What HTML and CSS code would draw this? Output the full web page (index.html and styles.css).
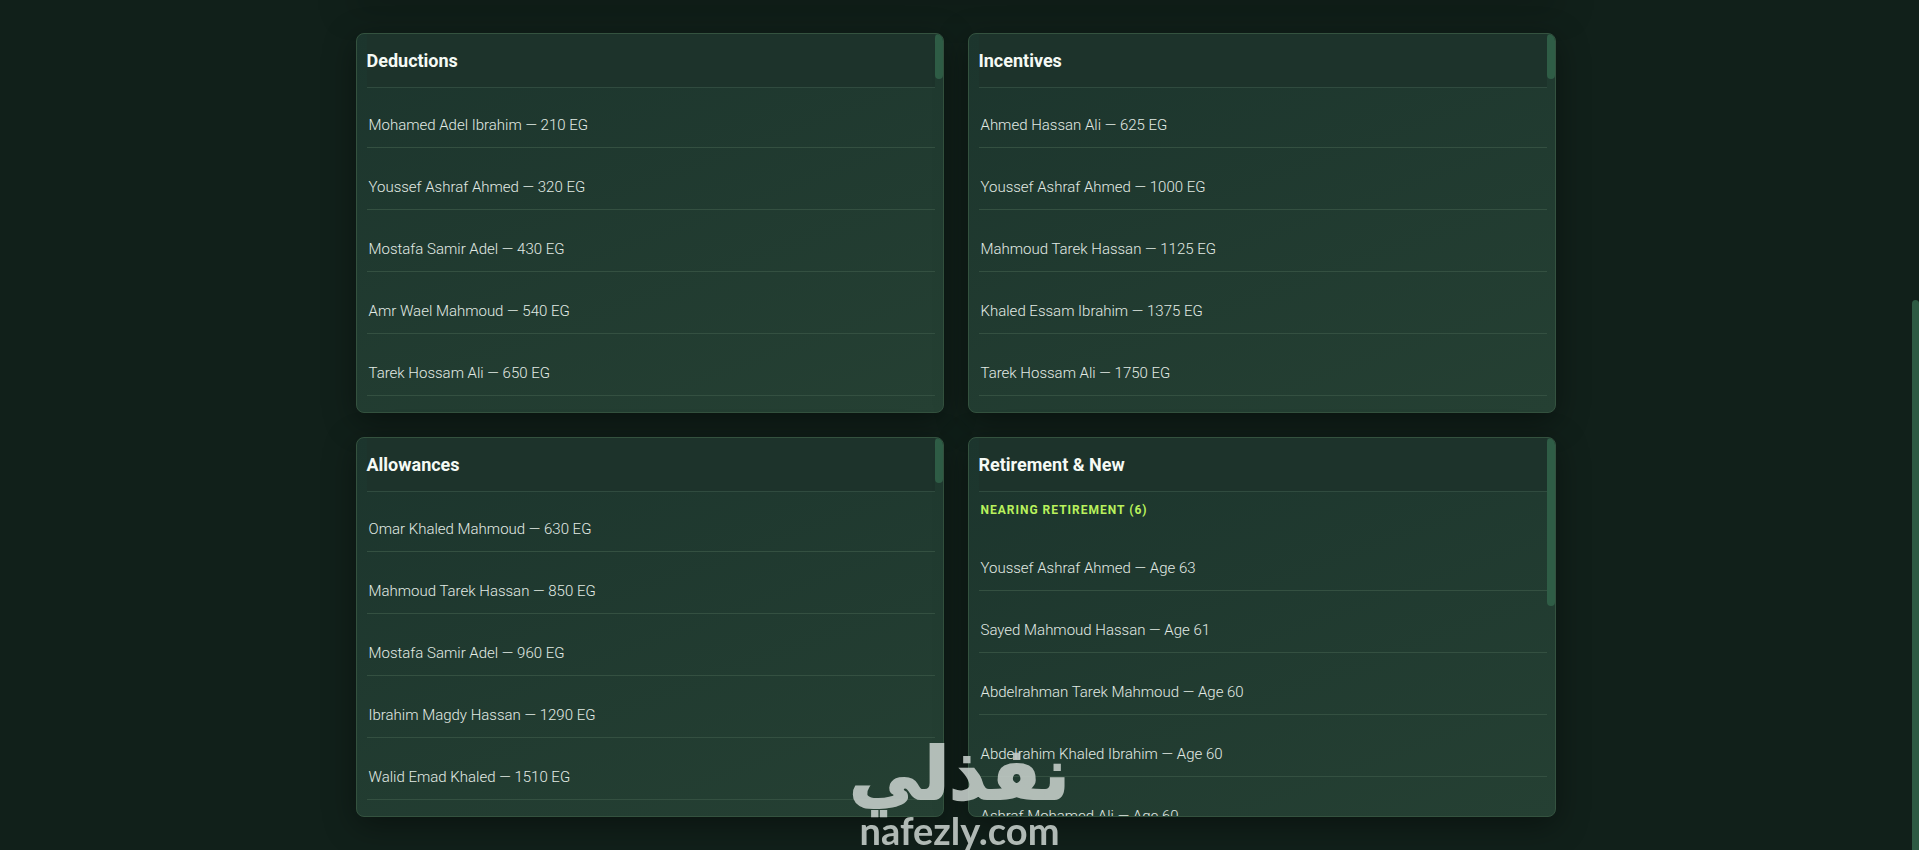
FILE: index.html
```html
<!DOCTYPE html>
<html lang="en">

<head>
    <meta charset="UTF-8">
    <meta name="viewport" content="width=device-width, initial-scale=1.0">
    <title>Payroll Dashboard</title>
    <link rel="stylesheet" href="styles.css">
</head>

<body>

    <div class="section-shadow"></div>

    <main class="cards">

        <!-- Deductions -->
        <section class="card">
            <h2>Deductions</h2>
            <ul class="list">
                <li>Mohamed Adel Ibrahim — 210 EG</li>
                <li>Youssef Ashraf Ahmed — 320 EG</li>
                <li>Mostafa Samir Adel — 430 EG</li>
                <li>Amr Wael Mahmoud — 540 EG</li>
                <li>Tarek Hossam Ali — 650 EG</li>
            </ul>
            <span class="thumb"></span>
        </section>

        <!-- Incentives -->
        <section class="card">
            <h2>Incentives</h2>
            <ul class="list">
                <li>Ahmed Hassan Ali — 625 EG</li>
                <li>Youssef Ashraf Ahmed — 1000 EG</li>
                <li>Mahmoud Tarek Hassan — 1125 EG</li>
                <li>Khaled Essam Ibrahim — 1375 EG</li>
                <li>Tarek Hossam Ali — 1750 EG</li>
            </ul>
            <span class="thumb"></span>
        </section>

        <!-- Allowances -->
        <section class="card">
            <h2>Allowances</h2>
            <ul class="list">
                <li>Omar Khaled Mahmoud — 630 EG</li>
                <li>Mahmoud Tarek Hassan — 850 EG</li>
                <li>Mostafa Samir Adel — 960 EG</li>
                <li>Ibrahim Magdy Hassan — 1290 EG</li>
                <li>Walid Emad Khaled — 1510 EG</li>
            </ul>
            <span class="thumb"></span>
        </section>

        <!-- Retirement -->
        <section class="card">
            <h2>Retirement &amp; New</h2>
            <h3>Nearing Retirement (6)</h3>
            <ul class="list">
                <li>Youssef Ashraf Ahmed — Age 63</li>
                <li>Sayed Mahmoud Hassan — Age 61</li>
                <li>Abdelrahman Tarek Mahmoud — Age 60</li>
                <li>Abdelrahim Khaled Ibrahim — Age 60</li>
                <li>Ashraf Mohamed Ali — Age 60</li>
            </ul>
            <span class="thumb thumb-long"></span>
        </section>

    </main>

    <div class="watermark">
        <span class="watermark-ar" lang="ar" dir="rtl">نفذلي</span>
        <span class="watermark-url">nafezly.com</span>
    </div>

    <div class="page-thumb"></div>

</body>

</html>
```

FILE: styles.css
```css
* {
    box-sizing: border-box;
}

body {
    margin: 0;
    padding: 0 8px 0 0;
    min-height: 100vh;
    background-color: #11201a;
    color: #e2ebe5;
    font-family: Roboto, "Liberation Sans", sans-serif;
    font-size: 15px;
    line-height: 24px;
    overflow: hidden;
}

.section-shadow {
    max-width: 1200px;
    height: 0;
    margin: 0 auto;
    box-shadow: 0 0 32px 4px rgba(0, 0, 0, 0.5);
}

.cards {
    display: grid;
    grid-template-columns: 1fr 1fr;
    gap: 24px;
    max-width: 1200px;
    margin: 0 auto;
    padding: 33px 0;
}

.card {
    position: relative;
    height: 380px;
    padding: 0 8px 0 10px;
    overflow: hidden;
    border: 1px solid #34523f;
    border-radius: 8px;
    background: linear-gradient(160deg, #1c352d, #254033);
    box-shadow: 0 8px 32px rgba(0, 0, 0, 0.4);
}

h2 {
    margin: 0;
    padding: 15px 0 14px;
    border-bottom: 1px solid #304b3f;
    background-color: #1d332b;
    color: #f5faf5;
    font-size: 18px;
    font-weight: 700;
}

h3 {
    margin: 0;
    padding: 6px 2px 9px;
    color: #b9f15c;
    font-size: 12px;
    font-weight: 700;
    letter-spacing: 1px;
    text-transform: uppercase;
}

.list {
    margin: 0;
    padding: 0;
    list-style: none;
}

.list li {
    padding: 27px 2px 10px;
    border-bottom: 1px solid #345041;
    font-weight: 300;
}

.list li:first-child {
    padding-top: 25px;
}

/* Scrollbars */
.thumb {
    position: absolute;
    top: 0;
    right: 0;
    width: 8px;
    height: 45px;
    border-radius: 4px;
    background-color: #2f5d46;
}

.thumb-long {
    height: 168px;
}

.page-thumb {
    position: fixed;
    right: 0;
    bottom: 0;
    width: 7px;
    height: 550px;
    border-radius: 4px 4px 0 0;
    background-color: #2d5a43;
}

/* Watermark */
.watermark {
    position: fixed;
    bottom: 0;
    left: 0;
    right: 0;
    display: flex;
    flex-direction: column;
    align-items: center;
    color: #c3cbc7;
    font-weight: 700;
    opacity: 0.9;
    pointer-events: none;
}

.watermark-ar {
    font-family: "DejaVu Sans", sans-serif;
    font-size: 72px;
    line-height: 72px;
    -webkit-text-stroke: 2px #c3cbc7;
}

.watermark-url {
    font-family: Lato, sans-serif;
    font-size: 38px;
    line-height: 40px;
}
```
